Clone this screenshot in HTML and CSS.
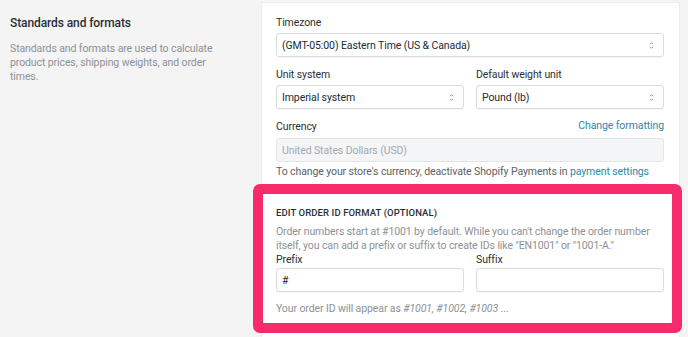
FILE: index.html
```html
<!DOCTYPE html>
<html lang="en">
<head>
    <meta charset="UTF-8">
    <title>Standards and formats</title>
    <link rel="stylesheet" href="styles.css">
</head>
<body>
    <div class="layout">
        <div class="annotation">
            <h2>Standards and formats</h2>
            <p>Standards and formats are used to calculate product prices, shipping weights, and order times.</p>
        </div>

        <div class="card">
            <div class="field">
                <label>Timezone</label>
                <div class="select">
                    <span>(GMT-05:00) Eastern Time (US &amp; Canada)</span>
                    <svg class="arrows" width="5" height="9" viewBox="0 0 5 9"><path d="M1 3.2 2.5 1.7 4 3.2M1 5.8 2.5 7.3 4 5.8" fill="none" stroke="#8f969d" stroke-width="1"/></svg>
                </div>
            </div>

            <div class="row">
                <div class="field">
                    <label>Unit system</label>
                    <div class="select">
                        <span>Imperial system</span>
                        <svg class="arrows" width="5" height="9" viewBox="0 0 5 9"><path d="M1 3.2 2.5 1.7 4 3.2M1 5.8 2.5 7.3 4 5.8" fill="none" stroke="#8f969d" stroke-width="1"/></svg>
                    </div>
                </div>
                <div class="field">
                    <label>Default weight unit</label>
                    <div class="select">
                        <span>Pound (lb)</span>
                        <svg class="arrows" width="5" height="9" viewBox="0 0 5 9"><path d="M1 3.2 2.5 1.7 4 3.2M1 5.8 2.5 7.3 4 5.8" fill="none" stroke="#8f969d" stroke-width="1"/></svg>
                    </div>
                </div>
            </div>

            <div class="field currency">
                <div class="label-row">
                    <label>Currency</label>
                    <a href="#">Change formatting</a>
                </div>
                <div class="input disabled">United States Dollars (USD)</div>
                <p class="help">To change your store's currency, deactivate Shopify Payments in <a href="#">payment settings</a></p>
            </div>

            <div class="order-id">
                <h3>Edit order ID format (optional)</h3>
                <p class="muted">Order numbers start at #1001 by default. While you can't change the order number itself, you can add a prefix or suffix to create IDs like "EN1001" or "1001-A."</p>
                <div class="row tight">
                    <div class="field">
                        <label>Prefix</label>
                        <div class="input">#</div>
                    </div>
                    <div class="field">
                        <label>Suffix</label>
                        <div class="input"></div>
                    </div>
                </div>
                <p class="muted preview">Your order ID will appear as <em>#1001, #1002, #1003</em> ...</p>
            </div>
        </div>
    </div>
</body>
</html>
```

FILE: styles.css
```css
body {
    margin: 0;
    background: #f4f4f5;
    font-family: 'Roboto', 'Liberation Sans', sans-serif;
    font-size: 10.5px;
    letter-spacing: -0.1px;
    color: #2b2f33;
    overflow: hidden;
}

.layout {
    display: flex;
    align-items: flex-start;
    padding-top: 3px;
}

.annotation {
    width: 240px;
    padding: 12px 0 0 10px;
    flex-shrink: 0;
}

.annotation h2 {
    margin: 0;
    font-size: 12px;
    line-height: 16px;
    font-weight: 500;
    color: #2b2f33;
}

.annotation p {
    margin: 11px 0 0;
    max-width: 205px;
    line-height: 14px;
    color: #8c9196;
}

.card {
    margin-left: 12px;
    width: 417px;
    box-sizing: border-box;
    background: #fff;
    padding: 12px 15px 10px 14px;
    min-height: 340px;
    box-shadow: 0 0 0 1px rgba(0, 0, 0, 0.03);
}

.field {
    margin-bottom: 10px;
}

label {
    display: block;
    line-height: 16px;
    margin-bottom: 2px;
    color: #2b2f33;
}

.row {
    display: flex;
    gap: 12px;
}

.row .field {
    flex: 1;
}

.select, .input {
    height: 24px;
    box-sizing: border-box;
    border: 1px solid #d9dcdf;
    border-radius: 3px;
    display: flex;
    align-items: center;
    justify-content: space-between;
    padding: 0 9px 0 5px;
    color: #212b36;
    box-shadow: 0 1px 0 rgba(0, 0, 0, 0.03);
}

.input.disabled {
    background: #f4f5f6;
    border-color: #e3e5e7;
    color: #a4a9ae;
    box-shadow: none;
}

.label-row {
    display: flex;
    justify-content: space-between;
    margin-bottom: 3px;
}

.label-row label {
    margin: 0;
}

a {
    color: #2a8aa6;
    text-decoration: none;
}

.currency {
    margin-bottom: 4px;
}

.help {
    margin: 2px 0 0;
    line-height: 16px;
    color: #5c6166;
}

.order-id {
    border: 10px solid #f72a6b;
    border-radius: 7px;
    margin: 0 -18px 0 -23px;
    padding: 12px 8px 7px 13px;
    background: #fff;
}

.order-id h3 {
    margin: 0;
    font-size: 9.5px;
    line-height: 14px;
    font-weight: 500;
    letter-spacing: 0.1px;
    text-transform: uppercase;
    color: #2b2f33;
}

.muted {
    color: #8c9196;
    line-height: 14px;
}

.order-id > .muted {
    margin: 5px 0 0;
}

.row.tight .field {
    margin-bottom: 0;
}

.row.tight label {
    line-height: 14px;
    margin-bottom: 1px;
}

.order-id .preview {
    margin: 10px 0 0;
}
```
